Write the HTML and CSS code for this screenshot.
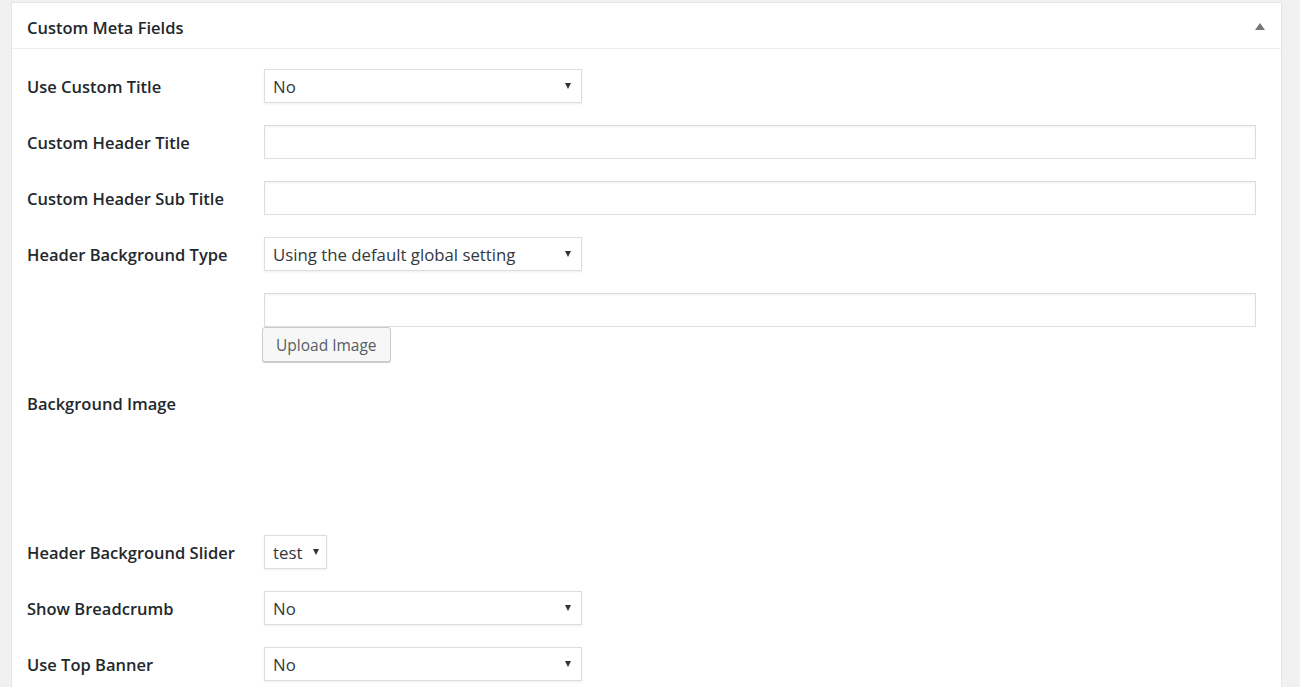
FILE: index.html
```html
<!DOCTYPE html>
<html>
<head>
<meta charset="utf-8">
<link rel="stylesheet" href="styles.css">
</head>
<body>
<div class="postbox">
  <div class="postbox-header">
    <h2 class="hndle">Custom Meta Fields</h2>
    <span class="toggle-arrow"></span>
  </div>
  <div class="inside">
    <div class="row">
      <div class="label">Use Custom Title</div>
      <div class="field"><div class="select wide"><span>No</span><i class="caret"></i></div></div>
    </div>
    <div class="row">
      <div class="label">Custom Header Title</div>
      <div class="field"><div class="text-input"></div></div>
    </div>
    <div class="row">
      <div class="label">Custom Header Sub Title</div>
      <div class="field"><div class="text-input"></div></div>
    </div>
    <div class="row">
      <div class="label">Header Background Type</div>
      <div class="field"><div class="select wide"><span>Using the default global setting</span><i class="caret"></i></div></div>
    </div>
    <div class="row">
      <div class="label">Background Image</div>
      <div class="field">
        <div class="text-input"></div>
        <button class="button">Upload Image</button>
        <div class="preview"></div>
      </div>
    </div>
    <div class="row">
      <div class="label">Header Background Slider</div>
      <div class="field"><div class="select small"><span>test</span><i class="caret"></i></div></div>
    </div>
    <div class="row">
      <div class="label">Show Breadcrumb</div>
      <div class="field"><div class="select wide"><span>No</span><i class="caret"></i></div></div>
    </div>
    <div class="row">
      <div class="label">Use Top Banner</div>
      <div class="field"><div class="select wide"><span>No</span><i class="caret"></i></div></div>
    </div>
  </div>
</div>
</body>
</html>
```
FILE: styles.css
```css
html, body {
  margin: 0;
  padding: 0;
  background: #f1f1f1;
  font-family: "Open Sans", "Noto Sans", sans-serif;
  color: #23282d;
  overflow: hidden;
}
.postbox {
  margin: 2px 18px 0 11px;
  background: #fff;
  border: 1px solid #e5e5e5;
  border-bottom: none;
  box-shadow: 0 1px 1px rgba(0,0,0,.04);
  height: 700px;
}
.postbox-header {
  height: 45px;
  border-bottom: 1px solid #eeeeee;
  display: flex;
  align-items: center;
  justify-content: space-between;
  padding: 0 16px 0 15px;
}
.hndle {
  margin: 0;
  padding-top: 3px;
  font-size: 16.5px;
  font-weight: 600;
  color: #23282d;
}
.toggle-arrow {
  width: 0;
  height: 0;
  border-left: 5px solid transparent;
  border-right: 5px solid transparent;
  border-bottom: 7px solid #72777c;
  margin-top: 1px;
}
.inside {
  padding: 9px 25px 0 15px;
}
.row {
  display: flex;
  align-items: center;
  padding: 11px 0;
}
.label {
  width: 237px;
  flex: none;
  padding-top: 1px;
  font-size: 16.5px;
  font-weight: 600;
  color: #23282d;
}
.field {
  flex: 1;
  display: flex;
  flex-direction: column;
  align-items: flex-start;
}
.select {
  box-sizing: border-box;
  height: 34px;
  border: 1px solid #dddddd;
  box-shadow: 0 1px 2px rgba(0,0,0,.07);
  background: #fff;
  display: flex;
  align-items: center;
  justify-content: space-between;
  padding: 1px 10px 0 8px;
  font-size: 16.8px;
  color: #32373c;
}
.select.wide { width: 318px; }
.select.small { width: 63px; padding-right: 7px; }
.caret {
  width: 0;
  height: 0;
  border-left: 3px solid transparent;
  border-right: 3px solid transparent;
  border-top: 6px solid #333;
  margin-top: -2px;
}
.text-input {
  box-sizing: border-box;
  width: 100%;
  height: 34px;
  border: 1px solid #dddddd;
  box-shadow: inset 0 1px 2px rgba(0,0,0,.07);
  background: #fff;
}
.button {
  box-sizing: border-box;
  height: 35px;
  margin-left: -2px;
  padding: 0 13px;
  border: 1px solid #cccccc;
  border-radius: 3px;
  background: #f7f7f7;
  box-shadow: 0 1px 0 #cccccc;
  color: #555d66;
  font-family: "Open Sans", "Noto Sans", sans-serif;
  font-size: 15.5px;
  cursor: pointer;
}
.preview {
  height: 151px;
}
```
